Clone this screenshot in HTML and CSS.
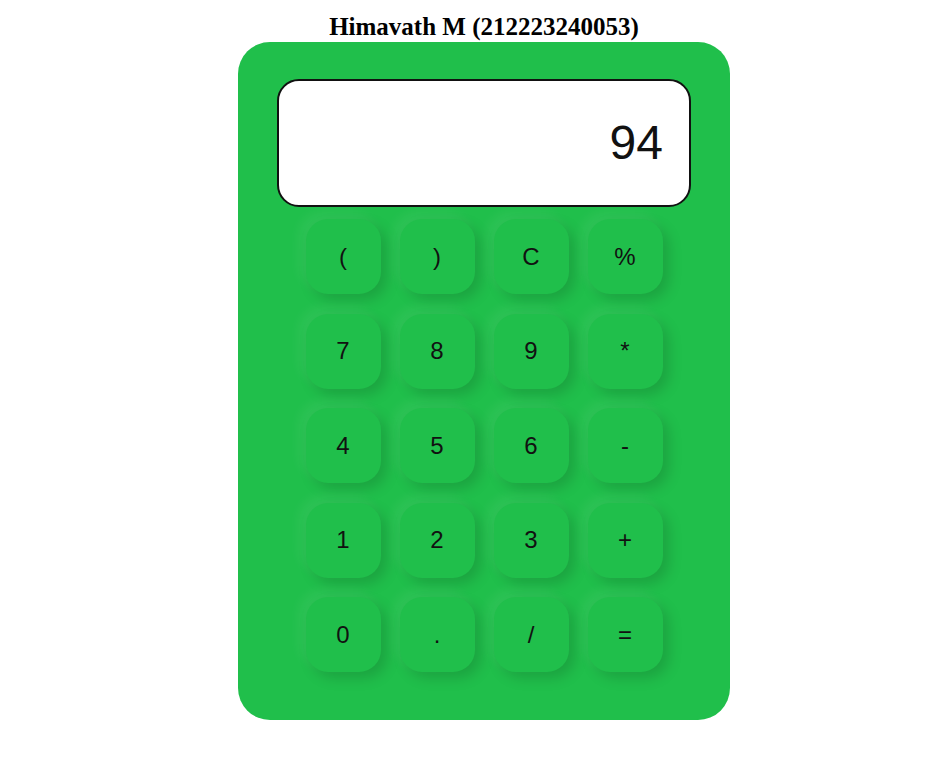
FILE: index.html
```html
<!DOCTYPE html>
<html>
<head>
<meta charset="utf-8">
<link rel="stylesheet" href="styles.css">
</head>
<body>
<div class="wrap">
<h2 class="title">Himavath M (212223240053)</h2>
<div class="calc">
  <div class="display">94</div>
  <div class="keys">
    <button class="key">(</button>
    <button class="key">)</button>
    <button class="key">C</button>
    <button class="key">%</button>
    <button class="key">7</button>
    <button class="key">8</button>
    <button class="key">9</button>
    <button class="key">*</button>
    <button class="key">4</button>
    <button class="key">5</button>
    <button class="key">6</button>
    <button class="key">-</button>
    <button class="key">1</button>
    <button class="key">2</button>
    <button class="key">3</button>
    <button class="key">+</button>
    <button class="key">0</button>
    <button class="key">.</button>
    <button class="key">/</button>
    <button class="key">=</button>
  </div>
</div>
</div>
</body>
</html>
```
FILE: styles.css
```css
html, body {
  margin: 0;
  padding: 0;
  background: #ffffff;
}
.wrap {
  width: 492px;
  margin-left: 238px;
}
.title {
  margin: 13px 0 2px;
  text-align: center;
  white-space: nowrap;
  font-family: "Liberation Serif", "Times New Roman", serif;
  font-weight: bold;
  font-size: 25px;
  line-height: 27px;
  color: #000;
}
.calc {
  width: 492px;
  height: 678px;
  box-sizing: border-box;
  background: #20bf4b;
  border-radius: 32px;
  padding: 37px 39px 0;
}
.display {
  height: 128px;
  box-sizing: border-box;
  border: 2px solid #111;
  border-radius: 22px;
  background: #fff;
  font-family: "Liberation Sans", Arial, sans-serif;
  font-size: 48px;
  color: #111;
  text-align: right;
  padding: 34px 26px 0 0;
  line-height: 56px;
}
.keys {
  margin-top: 12px;
  display: grid;
  grid-template-columns: repeat(4, 75px);
  grid-auto-rows: 75px;
  column-gap: 19px;
  row-gap: 19.5px;
  justify-content: center;
}
.key {
  width: 75px;
  height: 75px;
  border: none;
  border-radius: 22px;
  background: #20bf4b;
  font-family: "Liberation Sans", Arial, sans-serif;
  font-size: 24px;
  color: #111;
  padding: 0;
  box-shadow: 6px 6px 14px rgba(0, 0, 0, 0.15), -6px -6px 14px rgba(255, 255, 255, 0.07);
}
```
